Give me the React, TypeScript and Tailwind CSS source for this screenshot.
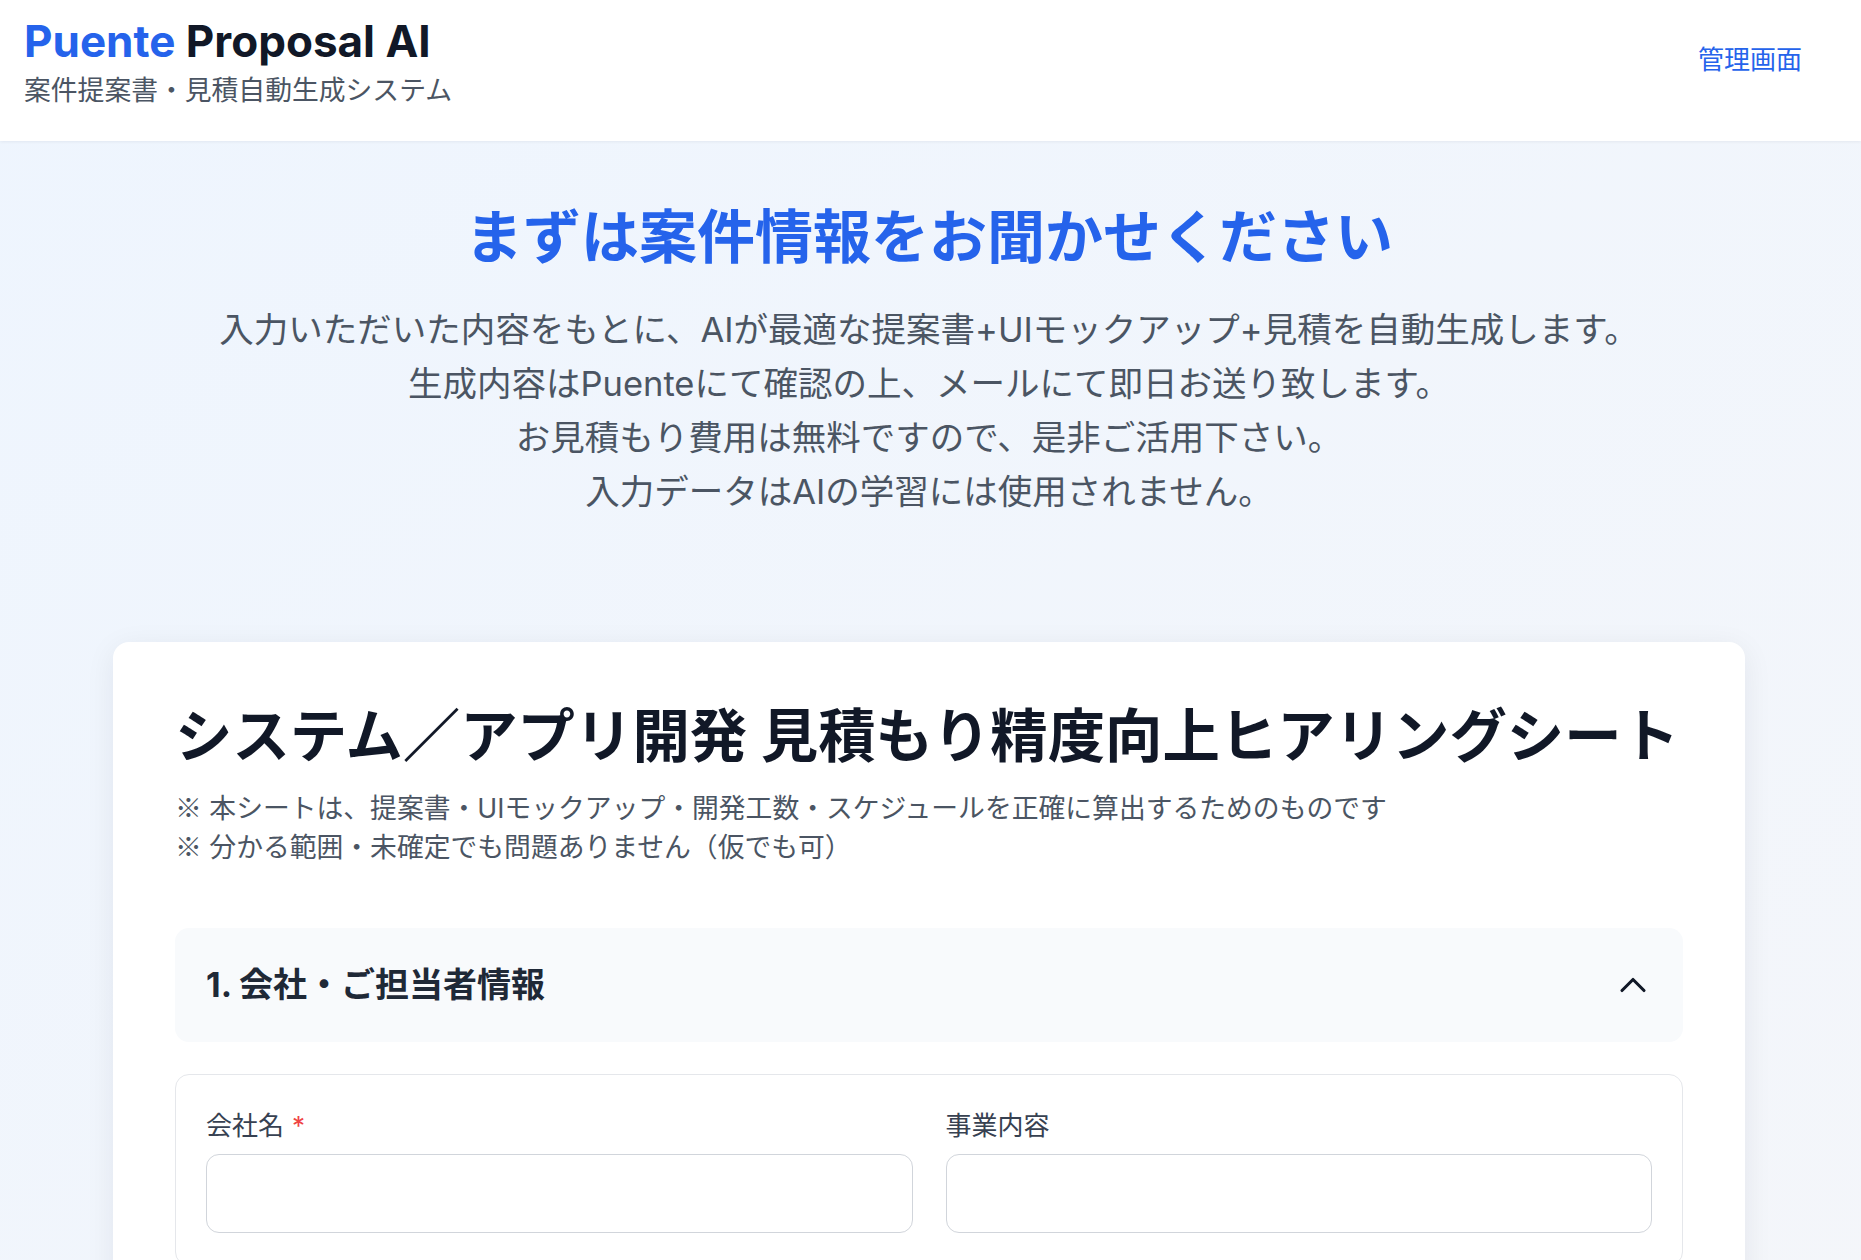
import { ChevronUp } from "lucide-react";

const font = "font-['Inter','Noto_Sans_CJK_JP',sans-serif]";
const cjk = "font-['Noto_Sans_CJK_JP',sans-serif]";

/** Single labelled text field used in the hearing sheet. */
function Field({ label, required }: { label: string; required?: boolean }) {
  return (
    <div className="flex flex-col gap-[10px]">
      <label className="text-[26px] leading-[36px] text-[#374151]">
        {label}
        {required ? <span className="ml-2 text-[#ef4444]">*</span> : null}
      </label>
      <input
        type="text"
        className="h-[79px] w-full rounded-[13px] border-[1.5px] border-[#d1d5db] bg-white px-5 text-[26px] outline-none"
      />
    </div>
  );
}

export default function App() {
  return (
    <div className={`${font} min-h-[1260px] bg-gradient-to-br from-[#eef5fe] to-[#f4f6fa]`}>
      <header className="flex h-[141px] items-start justify-between bg-white pl-[24px] pr-[59px] shadow-[0_1px_3px_rgba(15,23,42,0.06)]">
        <div className="pt-[14px]">
          <h1 className="text-[44px] font-bold leading-[54px]">
            <span className="text-[#2563eb]">Puente</span>{" "}
            <span className="text-[#111827]">Proposal AI</span>
          </h1>
          <p className="mt-[3px] text-[26.8px] leading-[38px] text-[#4b5563]">案件提案書・見積自動生成システム</p>
        </div>
        <a href="#" className="pt-[42px] text-[26px] leading-[36px] text-[#2563eb]">
          管理画面
        </a>
      </header>

      <main className="pb-10 pl-[113px] pr-[116px]">
        <section className="pt-[62px] text-center">
          <h2 className="text-[58px] font-bold leading-[68px] text-[#2563eb]">まずは案件情報をお聞かせください</h2>
          <div className="mt-[32px] text-[34.5px] leading-[54px] text-[#4b5563]">
            <p>入力いただいた内容をもとに、AIが最適な提案書+UIモックアップ+見積を自動生成します。</p>
            <p>生成内容はPuenteにて確認の上、メールにて即日お送り致します。</p>
            <p>お見積もり費用は無料ですので、是非ご活用下さい。</p>
            <p>入力データはAIの学習には使用されません。</p>
          </div>
        </section>

        <div className="mt-[123px] rounded-[16px] bg-white px-[62px] pb-12 pt-[59px] shadow-[0_6px_30px_rgba(15,23,42,0.07)]">
          <h2 className="text-[57.4px] font-bold leading-[71px] text-[#111827]">
            システム／アプリ開発 見積もり精度向上ヒアリングシート
          </h2>
          <div className="mt-[16px] text-[26.8px] leading-[38px] text-[#4b5563]">
            <p>
              <span className={cjk}>※</span> 本シートは、提案書・UIモックアップ・開発工数・スケジュールを正確に算出するためのものです
            </p>
            <p>
              <span className={cjk}>※</span> 分かる範囲・未確定でも問題ありません（仮でも可）
            </p>
          </div>

          <button
            type="button"
            className="mt-[62px] flex h-[114px] w-full items-center justify-between rounded-[14px] bg-[#f8fafc] pl-[31px] pr-[28px] text-left"
          >
            <span className="text-[34px] font-bold leading-[44px] text-[#1f2937]">1. 会社・ご担当者情報</span>
            <ChevronUp className="size-[44px] text-[#111827]" strokeWidth={1.7} />
          </button>

          <div className="mt-[32px] rounded-[14px] border border-[#e5e7eb] px-[30px] pb-8 pt-[33px]">
            <div className="grid grid-cols-2 gap-[33px]">
              <Field label="会社名" required />
              <Field label="事業内容" />
            </div>
          </div>
        </div>
      </main>
    </div>
  );
}
